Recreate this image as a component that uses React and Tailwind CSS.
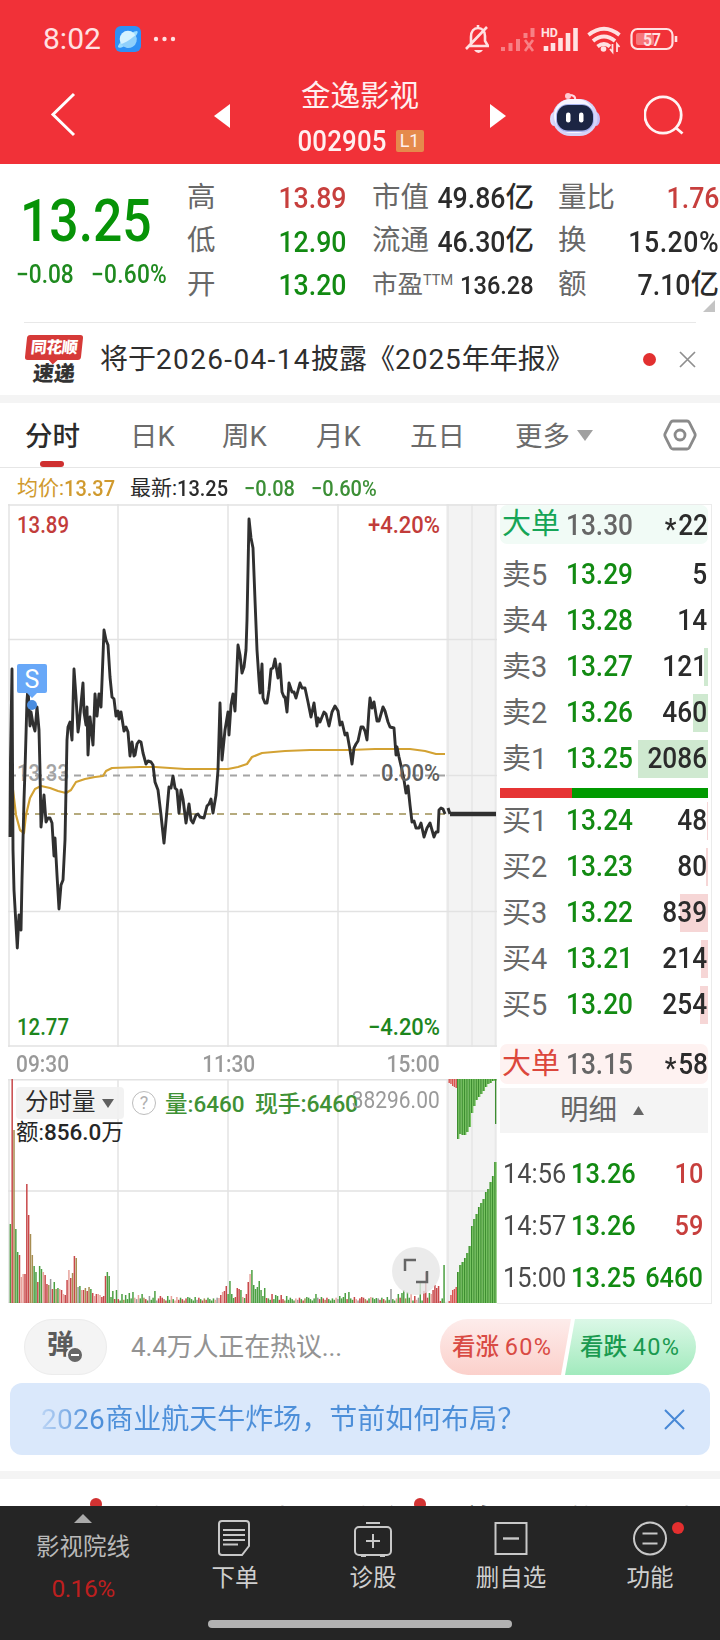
import clsx from 'clsx'

const QUOTES = [
  [
    { label: '高', value: '13.89', tone: 'up' },
    { label: '低', value: '12.90', tone: 'down' },
    { label: '开', value: '13.20', tone: 'down' },
  ],
  [
    { label: '市值', value: '49.86', unit: '亿' },
    { label: '流通', value: '46.30', unit: '亿' },
    { label: '市盈', sup: 'TTM', value: '136.28', small: true },
  ],
  [
    { label: '量比', value: '1.76', tone: 'up' },
    { label: '换', value: '15.20%', wide: true },
    { label: '额', value: '7.10', unit: '亿' },
  ],
]

const SELLS = [
  { label: '卖5', price: '13.29', qty: '5', bar: 0 },
  { label: '卖4', price: '13.28', qty: '14', bar: 0 },
  { label: '卖3', price: '13.27', qty: '121', bar: 4 },
  { label: '卖2', price: '13.26', qty: '460', bar: 15 },
  { label: '卖1', price: '13.25', qty: '2086', bar: 70 },
]

const BUYS = [
  { label: '买1', price: '13.24', qty: '48', bar: 1 },
  { label: '买2', price: '13.23', qty: '80', bar: 2 },
  { label: '买3', price: '13.22', qty: '839', bar: 28 },
  { label: '买4', price: '13.21', qty: '214', bar: 7 },
  { label: '买5', price: '13.20', qty: '254', bar: 8 },
]

const TRADES = [
  { time: '14:56', price: '13.26', qty: '10', up: true },
  { time: '14:57', price: '13.26', qty: '59', up: true },
  { time: '15:00', price: '13.25', qty: '6460', up: false },
]

const PRICE_LINE =
  '10,837 10.5,760 12,669 13,850 14,890 17.3,948 19,915 21,930 22,880 24,800 25,770 27,700 28,688 30,726 31,712 33,724 35,731 37,707 39,730 40,770 41,827 44,795 46,822 48,818 50,818 52,823 54,856 55,838 57,875 59,909 61,885 63,880 65,840 66,790 67,740 68,727 70,722 72,740 74,669 76,697 78,732 79,725 83,683 84,712 86,725 87,707 88,755 90,717 93,745 95,694 97,716 99,694 101,707 104,630 106,640 108,645 110,677 112,697 114,699 116,716 118,711 119,719 121,712 124,731 126,727 128,732 130,756 132,742 134,756 135,755 137,744 139,741 141,742 143,753 146,764 148,761 151,762 153,765 155,782 158,790 161,815 164,843 167,810 169,787 171,788 173,776 175,788 177,790 179,813 181,790 183,799 186,823 189,804 191,820 193,823 196,815 198,814 200,817 204,818 207,806 209,804 211,799 213,813 216,795 218,770 220,703 222,760 225,730 228,712 229,735 231,705 233,694 235,711 236,690 238,645 240,655 242,673 244,667 246,650 247,620 248,570 249,519 251,538 253,548 255,600 257,650 259,680 260,693 262,664 263,698 265,703 267,703 269,690 271,669 273,668 275,659 278,678 280,664 282,692 284,697 285,697 287,712 289,683 292,692 294,692 296,698 300,683 302,688 305,688 308,702 311,717 314,703 317,726 318,718 320,722 324,712 326,714 329,726 332,712 335,706 338,711 340,725 342,722 345,735 347,733 350,750 352,764 354,748 356,744 358,741 361,727 363,727 365,731 367,740 369,710 370,698 372,708 374,702 377,721 379,721 383,707 385,711 388,722 390,727 394,728 396,755 397,747 399,757 402,770 404,780 406,793 408,786 410,805 412,822 414,821 416,828 419,828 421,823 424,837 427,828 430,823 434,837 436,832 438,832 439,810 441,808 443,809 445,814'

const AVERAGE_LINE =
  '13,790 16,815 20,830 24,833 26,815 30,798 35,789 41,786 50,788 58,791 66,793 71,790 76,782 85,779 95,777 103,776 106,771 112,768 140,767 155,767 185,769 228,769 238,767 247,764 252,757 262,753 285,751 310,750 350,750 375,749 410,749 425,751 436,754 445,754'

const RED = '#c8484a'
const PALE_RED = '#e8a39c'
const GREEN = '#4c9f42'
const TAN = '#a78e52'
const GRAY = '#999999'

const BAR_COLORS = { r: RED, p: PALE_RED, g: GREEN, t: TAN, x: GRAY }

// colour key + height, one entry per minute
const OPENING =
  'g78 r223 t172 g73 g50 r47 p25 p28 r28 r118 r87 t68 t47 g36 g30 r20 g36 g33 p30 r27 r18 t17 x23 r13 g20 t13 g14 p13 r12 p8 r7 r22 p32 r24 t29 r46 t44 x15 g16 p12 r12 t14 r11 t15 g13 r9 p6 r8 p8 p7 r5 r6 r26 g30 g26 g5 g11 r3 g12'

const PEAKS = {
  61: 'g8', 63: 'g7', 65: 'g9', 67: 'g10', 70: 'p7', 72: 'g8', 76: 'x6', 79: 'g11', 82: 'r6', 86: 'g6', 88: 'p6', 91: 'p5',
  97: 'g5', 101: 'g5', 114: 'p4', 115: 'r7', 116: 'p10', 117: 'r11', 118: 'r16', 119: 'g8', 120: 'g21', 121: 'g8', 122: 'g4',
  123: 'r5', 124: 'r14', 125: 'r13', 126: 'g12', 127: 'p5', 128: 'g4', 129: 'r8', 130: 'r20', 131: 'p28', 132: 'g32',
  133: 'g17', 134: 'g13', 135: 'g15', 136: 'g21', 137: 'g12', 138: 'g6', 139: 'g14', 140: 'r4', 143: 'r8', 145: 'g7',
  146: 'g6', 148: 'r7', 151: 'g6', 162: 'g5', 167: 'g8', 170: 'g5', 180: 'g6', 182: 'g5', 183: 'g9', 185: 'g10', 188: 'r5',
  192: 'r5', 197: 'p5', 200: 'g4', 206: 'g5', 208: 'x13', 212: 'g8', 214: 'g9', 215: 'g12', 217: 'g10', 219: 'p8',
  221: 'r6', 224: 'g19', 226: 'r11', 227: 'r30', 229: 'g9', 230: 'p8', 231: 'r12', 232: 'r17', 233: 'r14', 234: 'r16',
  235: 'r1', 237: 'g37',
}

function buildVolume() {
  const bars = OPENING.split(' ')
  for (let i = bars.length; i < 238; i++) {
    const key = 'grgpgtrggrx'[(i * 7) % 11]
    bars.push(PEAKS[i] || key + (1.5 + ((i * 13) % 5) * 0.7))
  }
  return bars.map((b) => ({ color: BAR_COLORS[b[0]], h: Number(b.slice(1)) }))
}

const VOLUME = buildVolume()

const LATE_TOP = [60, 55, 56, 56, 53, 48, 34, 27, 21, 18, 15, 12, 8, 5, 4, 2, 1.5]
const LATE_BOTTOM = [31, 38, 41, 45, 50, 57, 77, 84, 89, 96, 100, 104, 111, 114, 121, 127, 141]

const toneClass = { up: 'text-[#c73f3d]', down: 'text-[#128a12]' }

// condensed figures
function Fig({ className, children }) {
  return <span className={clsx('inline-block scale-x-[.89] font-medium whitespace-nowrap', className)}>{children}</span>
}

function StatusBar() {
  return (
    <div className="flex h-[78px] items-center justify-between pl-[43px] pr-[42px] text-[#ffe1e2]">
      <div className="flex items-center">
        <span className="w-[72px] text-[30px] leading-none">8:02</span>
        <svg width="26" height="26" viewBox="0 0 26 26">
          <rect width="26" height="26" rx="6" fill="#2e90f5" />
          <path d="M3 21C2 18 16 5 22 5c2 1-1 6-7 11S4 23 3 21Z" fill="#9bdcff" />
          <circle cx="13" cy="13" r="8.3" fill="#d5f2ff" />
          <path d="M6 18C11 17 17 12 20.500 9a8.300 8.300 0 0 1-14.500 9Z" fill="#8fd0fc" />
        </svg>
        <svg className="ml-3" width="24" height="6" viewBox="0 0 24 6" fill="currentColor">
          <circle cx="3" cy="3" r="2.200" />
          <circle cx="11.500" cy="3" r="2.200" />
          <circle cx="20" cy="3" r="2.200" />
        </svg>
      </div>
      <svg width="214" height="32" viewBox="464 23 214 32" fill="none" stroke="currentColor">
        <path d="M468 46h21M471 45V37c0-6 3-9 7-9s7 3 7 8v5l3 5M478 28v-3M466 49 487 27" strokeWidth="2.600" />
        <path d="M474 50h9q-2 3-4.500 3T474 50Z" fill="currentColor" stroke="none" />
        <g opacity=".45" strokeWidth="4">
          <path d="M503 51v-4M510.500 51V43M518 51V39M525.500 38v-5M532.500 37v-9" />
          <path d="m525 40 8 11m0-11-8 11" strokeWidth="2.600" />
        </g>
        <path d="M546 51v-5M553 51v-8M560.500 51V38M568 51V33M575.500 51V28" strokeWidth="4.600" />
        <text x="541" y="37" fontSize="12.500" fontWeight="700" fill="currentColor" stroke="none">HD</text>
        <path d="M588.500 35q15.500-12.500 31 0M593 41q11-9 22 0M597.500 46.500q6.500-5 12.500 0" strokeWidth="3.800" />
        <circle cx="603.500" cy="49" r="2.800" fill="currentColor" stroke="none" />
        <path d="M612.500 44v8l-2.500-3M617 52v-8l2.500 3" strokeWidth="1.800" />
        <rect x="631.500" y="29" width="41" height="20" rx="6" strokeWidth="2.200" />
        <rect x="636" y="33" width="18" height="12" rx="2" fill="currentColor" opacity=".4" stroke="none" />
        <path d="M676 36v6" strokeWidth="2.600" />
        <text x="643" y="45.500" fontSize="18" fontWeight="600" textLength="18" lengthAdjust="spacingAndGlyphs" fill="currentColor" stroke="none">57</text>
      </svg>
    </div>
  )
}

function Robot() {
  return (
    <svg width="50" height="46" viewBox="0 0 50 46">
      <path d="M25 9c1-5-2-6-6-6" fill="none" stroke="#ffd9e2" strokeWidth="2" />
      <circle cx="18" cy="4" r="3" fill="#ffc9d2" />
      <ellipse cx="4" cy="27" rx="4" ry="7" fill="#dcdcfa" />
      <ellipse cx="46" cy="27" rx="4" ry="7" fill="#c3bdf6" />
      <rect x="2.500" y="7" width="45" height="37" rx="18" fill="#d5d4f8" />
      <rect x="4" y="7" width="40" height="34" rx="17" fill="#f8f6ff" />
      <rect x="6" y="12" width="38" height="28" rx="12" fill="#a9b3ee" />
      <rect x="7" y="13" width="36" height="25.500" rx="11" fill="#1c2543" />
      <rect x="16" y="20.500" width="4.500" height="10" rx="2.200" fill="#fff" />
      <rect x="29" y="20.500" width="4.500" height="10" rx="2.200" fill="#fff" />
    </svg>
  )
}

function TitleBar() {
  return (
    <div className="flex h-[86px] items-start text-white">
      <svg className="ml-[49px] mt-[14px]" width="30" height="46" viewBox="0 0 30 46" fill="none" stroke="#fff" strokeWidth="3">
        <path d="M25 2 4 22.500 25 43" />
      </svg>
      <svg className="ml-[135px] mt-[26px]" width="16" height="24" viewBox="0 0 16 24" fill="#fff">
        <path d="M16 0v24L0 12Z" />
      </svg>
      <div className="flex w-[260px] flex-col items-center text-[#fff0f0]">
        <span className="mt-[1px] text-[29.500px] leading-[34px]">金逸影视</span>
        <div className="ml-[-4px] mt-[14px] flex items-center">
          <Fig className="text-[29px] leading-[28px] tracking-[0.200px]">002905</Fig>
          <span className="ml-[3px] flex h-[22px] w-[28px] items-center justify-center rounded-[2px] bg-[#e58a4c] text-[18px] leading-none">L1</span>
        </div>
      </div>
      <svg className="mt-[26px]" width="16" height="24" viewBox="0 0 16 24" fill="#fff">
        <path d="M0 0v24l16-12Z" />
      </svg>
      <div className="ml-[44px] mt-[14px]">
        <Robot />
      </div>
      <svg className="ml-[44px] mt-[17px]" width="42" height="42" viewBox="0 0 42 42" fill="none" stroke="#fff3f3" strokeWidth="2.800">
        <circle cx="19" cy="20" r="18.200" />
        <path d="m31.500 32.500 7 6" />
      </svg>
    </div>
  )
}

function QuoteColumn({ rows, className }) {
  return (
    <div className={className}>
      {rows.map((row) => (
        <div key={row.label} className="flex h-[43.500px] items-center justify-between leading-none">
          <span className={clsx('flex text-[#686868]', row.sup ? 'text-[25.500px]' : 'text-[28.500px]')}>
            {row.label}
            {row.sup && <sup className="top-0 mt-[2px] text-[14.500px] leading-none">{row.sup}</sup>}
          </span>
          <span className={clsx('flex w-0 items-center justify-end', toneClass[row.tone] || 'text-[#2b2b2b]')}>
            <Fig className={clsx('mt-px origin-right', row.small ? 'text-[26.500px]' : 'text-[30px]', row.wide && 'tracking-[0.600px]')}>
              {row.value}
            </Fig>
            {row.unit && <span className="text-[28.500px] font-medium">{row.unit}</span>}
          </span>
        </div>
      ))}
    </div>
  )
}

function QuotePanel() {
  return (
    <div className="flex h-[159px] flex-col">
      <div className="flex h-[136px] pt-[12px]">
        <div className="w-[187px] text-[#079307]">
          <span className="ml-[20px] mt-[15px] block w-[160px] origin-left scale-x-[.86] text-[60px] font-medium leading-[60px]">13.25</span>
          <div className="mt-[9px] flex text-[25.500px] font-medium leading-[28px] text-[#1f8a1f]">
            <Fig className="ml-[16px] w-[75px] origin-left">−0.08</Fig>
            <Fig className="origin-left tracking-[0.300px]">−0.60%</Fig>
          </div>
        </div>
        <QuoteColumn rows={QUOTES[0]} className="w-[160px]" />
        <QuoteColumn rows={QUOTES[1]} className="ml-[25px] w-[162px]" />
        <QuoteColumn rows={QUOTES[2]} className="ml-[24px] w-[161px]" />
      </div>
      <svg className="ml-[703px]" width="12" height="12" viewBox="0 0 12 12" fill="#c4c4c4">
        <path d="M12 0v12H0Z" />
      </svg>
      <div className="mx-6 mt-[10px] h-px bg-[#e8e8e8]" />
    </div>
  )
}

function Notice() {
  return (
    <div className="flex h-[72px] items-center pl-6 pr-6 pt-[1px]">
      <div className="flex w-[60px] flex-col items-center">
        <span className="relative flex h-[25px] w-[56px] -skew-x-6 items-center justify-center rounded-[3px] bg-[#d63a38] text-[16px] font-black leading-none tracking-[-0.500px] text-white">
          同花顺
          <span className="absolute -bottom-[3px] left-[25px] size-[7px] rotate-45 bg-[#d63a38]" />
        </span>
        <span className="mt-[4px] -skew-x-6 text-[21px] font-black leading-[21px] text-[#333]">速递</span>
      </div>
      <span className="ml-[16px] flex-1 whitespace-nowrap text-[28px] leading-none text-[#2e2e2e]">
        将于<span className="tracking-[1.350px]">2026-04-14</span>披露《<span className="tracking-[1px]">2025</span>年年报》
      </span>
      <span className="size-[13px] rounded-full bg-[#e23030]" />
      <svg className="ml-[23px]" width="17" height="17" viewBox="0 0 17 17" stroke="#8f8f8f" strokeWidth="1.700">
        <path d="m1 1 15 15M16 1 1 16" />
      </svg>
    </div>
  )
}

function PeriodTabs() {
  return (
    <div className="flex h-[65px] border-b border-[#e6e6e6] text-[27.500px] leading-[67px] text-[#6b6b6b]">
      <div className="relative ml-[25px] w-[105px] font-medium text-[#2b2b2b]">
        分时
        <span className="absolute bottom-0 left-[15px] h-[6px] w-6 rounded-full bg-[#cf3030]" />
      </div>
      <span className="w-[92px]">日K</span>
      <span className="w-[94px]">周K</span>
      <span className="w-[94px]">月K</span>
      <span className="w-[105px]">五日</span>
      <span>更多</span>
      <svg className="ml-[7px] mt-[27px]" width="16" height="11" viewBox="0 0 16 11" fill="#a0a0a0">
        <path d="M0 0h16L8 11Z" />
      </svg>
      <svg className="ml-[70px] mt-[16px]" width="34" height="32" viewBox="0 0 34 32" fill="none" stroke="#8a8a8a" strokeWidth="2.800">
        <path d="M10 2h14q1.500 0 2.300 1.400l5.500 11q.8 1.600 0 3.200l-5.500 11Q25.500 30 24 30H10q-1.500 0-2.300-1.400l-5.500-11q-.8-1.600 0-3.200l5.500-11Q8.500 2 10 2Z" />
        <circle cx="17" cy="16" r="5" />
      </svg>
    </div>
  )
}

function ChartLegend() {
  return (
    <div className="flex h-[37px] items-center pl-[17px] pt-[3px] text-[21px] leading-none text-[#2b2b2b]">
      <span className="flex w-[113px] items-center text-[#d09a2e]">
        均价:<Fig className="origin-left text-[22.500px]">13.37</Fig>
      </span>
      <span className="flex w-[114px] items-center">
        最新:<Fig className="origin-left text-[22.500px]">13.25</Fig>
      </span>
      <Fig className="w-[67px] origin-left text-[22.500px] text-[#3c8f36]">−0.08</Fig>
      <Fig className="origin-left text-[22.500px] text-[#3c8f36]">−0.60%</Fig>
    </div>
  )
}

function PriceChart() {
  return (
    <svg className="block" width="489" height="543" viewBox="8 504 489 543" fill="none">
      <rect x="446" y="504" width="51" height="543" fill="#f3f3f3" />
      <path d="M9 504V1047M118 504V1047M228 504V1047M338 504V1047M448 504V1047M472 504V1047M495.500 504V1047" stroke="#e8e8e8" strokeWidth="1.800" />
      <path d="M8 505H497M8 639.500H497M446 775.500H497M8 911.500H497M8 1046H497" stroke="#e2e2e2" strokeWidth="1.400" />
      <path d="M9 775.500H446" stroke="#a4a4a4" strokeWidth="1.800" strokeDasharray="7 6" />
      <path d="M9 814H446" stroke="#b5aa7d" strokeWidth="1.800" strokeDasharray="7 6" />
      <g fontSize="24" fontWeight="500">
        <text x="17" y="533" textLength="52" lengthAdjust="spacingAndGlyphs" fill="#c23c3a">13.89</text>
        <text x="368" y="533" textLength="72" lengthAdjust="spacingAndGlyphs" fill="#c23c3a">+4.20%</text>
        <text x="17" y="781" textLength="52" lengthAdjust="spacingAndGlyphs" fill="#a4a4a4">13.33</text>
        <text x="17" y="1035" textLength="52" lengthAdjust="spacingAndGlyphs" fill="#1d861d">12.77</text>
        <text x="368" y="1035" textLength="72" lengthAdjust="spacingAndGlyphs" fill="#1d861d">−4.20%</text>
      </g>
      <polyline points={AVERAGE_LINE} stroke="#d3a233" strokeWidth="2.200" strokeLinejoin="round" />
      <polyline points={PRICE_LINE} stroke="#303030" strokeWidth="2.900" strokeLinejoin="round" />
      <text x="381" y="781" textLength="59" lengthAdjust="spacingAndGlyphs" fontSize="24" fontWeight="500" fill="#606060">0.00%</text>
      <path d="M448 808l2 6" stroke="#303030" strokeWidth="3" />
      <path d="M450 814H496" stroke="#303030" strokeWidth="4.400" />
      <circle cx="32" cy="705" r="5" fill="#4a8de0" />
      <path d="M19 664h26q2 0 2 2v25q0 2-2 2h-8l-5 5-5-5h-8q-2 0-2-2v-25q0-2 2-2Z" fill="#68a8f8" />
      <text x="32" y="688" fontSize="25" textAnchor="middle" fill="#fff">S</text>
    </svg>
  )
}

function TimeAxis() {
  return (
    <div className="flex h-[32px] items-center justify-between pl-[8px] pr-[57px] pt-[3px] text-[23.500px] leading-none text-[#999]">
      <Fig className="origin-left">09:30</Fig>
      <Fig className="pl-[2px]">11:30</Fig>
      <Fig className="origin-right">15:00</Fig>
    </div>
  )
}

function VolumeChart() {
  return (
    <div className="relative h-[224px] w-[489px]">
      <svg className="block" width="489" height="224" viewBox="8 1079 489 224">
        <rect x="446" y="1079" width="51" height="224" fill="#f3f3f3" />
        <path d="M9 1079V1303M118 1079V1303M228 1079V1303M338 1079V1303M448 1079V1303M472 1079V1303M495.500 1079V1303" stroke="#e8e8e8" strokeWidth="1.800" />
        <path d="M8 1079.700H497M8 1191H497M8 1302.500H497" stroke="#e2e2e2" strokeWidth="1.400" />
        {VOLUME.map((bar, i) => (
          <rect key={i} x={9.6 + i * 1.83} y={1302 - bar.h} width="1.500" height={bar.h + 1} fill={bar.color} />
        ))}
        {[4, 5, 7, 8, 9].map((h, i) => (
          <rect key={h} x={448.5 + i * 1.75} y="1079" width="1.400" height={h} fill="#d9534f" />
        ))}
        {[2, 8, 13, 14, 16].map((h, i) => (
          <rect key={h} x={448.5 + i * 1.75} y={1303 - h} width="1.400" height={h} fill="#d9534f" />
        ))}
        {LATE_TOP.map((h, i) => (
          <g key={i}>
            <rect x={457 + i * 2.33} y="1079" width="2.400" height={h} fill="#79c463" />
            <rect x={457 + i * 2.33} y="1079" width="1.100" height={h} fill="#3d8d31" />
          </g>
        ))}
        {LATE_BOTTOM.map((h, i) => (
          <g key={i}>
            <rect x={457 + i * 2.33} y={1303 - h} width="2.400" height={h} fill="#79c463" />
            <rect x={457 + i * 2.33} y={1303 - h} width="1.100" height={h} fill="#3d8d31" />
          </g>
        ))}
        <rect x="495" y="1079" width="1.300" height="45" fill="#3d8d31" />
      </svg>
      <div className="absolute inset-x-0 top-0 pl-2 leading-none">
        <div className="mt-[8px] flex h-[32px] items-center">
          <span className="flex h-[32px] w-[108px] items-center rounded bg-[#f1f1f1]/90 pl-[9px] text-[23.500px] text-[#2b2b2b]">
            分时量
            <svg className="ml-[6px]" width="12" height="9" viewBox="0 0 12 9" fill="#606060">
              <path d="M0 0h12L6 9Z" />
            </svg>
          </span>
          <span className="ml-[8px] flex size-[24px] items-center justify-center rounded-full border-[1.500px] border-[#bdbdbd] text-[18px] text-[#b0b0b0]">?</span>
          <span className="ml-[9px] mt-[2px] w-[90px] whitespace-nowrap text-[22.500px] font-medium text-[#3f9135]">量:6460</span>
          <span className="mt-[2px] whitespace-nowrap text-[23px] font-medium tracking-[-0.200px] text-[#3f9135]">现手:6460</span>
        </div>
        <span className="mt-[1px] block text-[22.500px] leading-[24px] text-[#262626]">
          额:<span className="font-medium">856.0</span>万
        </span>
      </div>
      <Fig className="absolute right-[57px] top-[10px] origin-right text-[23.500px] font-normal leading-none text-[#9a9a9a]">38296.00</Fig>
      <div className="absolute left-[384px] top-[168px] flex size-[48px] items-center justify-center rounded-full bg-[#e6e6e6]/80">
        <svg width="26" height="26" viewBox="0 0 26 26" fill="none" stroke="#666" strokeWidth="2.500">
          <path d="M2 13V2h11M24 13v11H13" />
        </svg>
      </div>
    </div>
  )
}

function BigOrder({ price, qty, className, labelClass }) {
  return (
    <div className={clsx('flex items-center rounded-[7px] pl-[2px] text-[29.500px] leading-none', className)}>
      <span className={clsx('w-[64px] text-[29px]', labelClass)}>大单</span>
      <Fig className="mt-[2px] w-[68px] origin-left text-[#666]">{price}</Fig>
      <Fig className="mt-[2px] flex-1 origin-right text-right text-[#2b2b2b]">
        <span className="relative top-[4px] mr-[2px]">*</span>
        {qty}
      </Fig>
    </div>
  )
}

function BookRow({ label, price, qty, bar, barClass }) {
  return (
    <div className="relative flex h-[46px] items-center pl-[2px] text-[29px] leading-none">
      <span className={clsx('absolute right-0 top-[4px] h-[38px]', barClass)} style={{ width: bar }} />
      <span className="w-[64px] text-[#686868]">{label}</span>
      <Fig className="w-[68px] origin-left text-[29.500px] text-[#128a12]">{price}</Fig>
      <Fig className="relative flex-1 origin-right pr-[1px] text-right text-[29.500px] text-[#2b2b2b]">{qty}</Fig>
    </div>
  )
}

function OrderBook() {
  return (
    <div className="h-[800px] w-[215px] border border-l-0 border-[#ebebeb] pl-[3px] pr-[3px]">
      <BigOrder price="13.30" qty="22" className="h-[39px] bg-[#f1fbf6]" labelClass="text-[#16a557]" />
      <div className="pt-[8px]">
        {SELLS.map((row) => (
          <BookRow key={row.label} {...row} barClass="bg-[#cfe9d0]" />
        ))}
      </div>
      <div className="mt-[6px] flex h-[10px] bg-[#009a00]">
        <span className="w-[72px] bg-[#e63434]" />
      </div>
      <div>
        {BUYS.map((row) => (
          <BookRow key={row.label} {...row} barClass="bg-[#f6d6d6]" />
        ))}
      </div>
      <BigOrder price="13.15" qty="58" className="mt-[16px] h-[40px] bg-[#fef2f1]" labelClass="text-[#dc473c]" />
      <div className="mt-[4px] flex h-[45px] items-center justify-center bg-[#f4f4f4] text-[28.500px] leading-none text-[#666]">
        <span className="-ml-[4px] mt-[2px]">明细</span>
        <svg className="ml-[16px]" width="11" height="9" viewBox="0 0 11 9" fill="#666">
          <path d="M0 9h11L5.500 0Z" />
        </svg>
      </div>
      <div className="pt-[15px]">
        {TRADES.map((t) => (
          <div key={t.time} className="flex h-[52px] items-center pl-[3px] pr-[3px] text-[28.500px] leading-none">
            <Fig className="w-[68px] origin-left font-normal text-[#4a4a4a]">{t.time}</Fig>
            <Fig className="w-[68px] origin-left text-[#128a12]">{t.price}</Fig>
            <span className={clsx('flex w-[64px] justify-end', t.up ? toneClass.up : toneClass.down)}>
              <Fig className="origin-right">{t.qty}</Fig>
            </span>
          </div>
        ))}
      </div>
    </div>
  )
}

function CommentRow() {
  return (
    <div className="mt-[15px] flex h-[56px] items-center px-6">
      <span className="relative flex h-[56px] w-[83px] items-center justify-center rounded-full border border-[#ececec] bg-[#f4f4f4] pb-[4px] pr-[10px] text-[27px] font-bold leading-none text-[#5b5b5b]">
        弹
        <svg className="absolute left-[41px] top-[26px]" width="18" height="18" viewBox="0 0 18 18">
          <circle cx="9" cy="9" r="8" fill="#666" stroke="#f4f4f4" strokeWidth="2" />
          <path d="M5 9h8" stroke="#fff" strokeWidth="2" />
        </svg>
      </span>
      <span className="ml-6 flex-1 text-[26px] leading-none tracking-[-0.150px] text-[#939393]">4.4万人正在热议...</span>
      <div className="flex h-[56px] w-[256px] overflow-hidden rounded-full text-[23.500px] font-medium leading-[56px]">
        <span className="w-[131px] bg-gradient-to-b from-[#fdeceb] to-[#fbd0cb] pl-[12px] text-[#d94a44] [clip-path:polygon(0_0,100%_0,121px_100%,0_100%)]">
          看涨 <span className="font-normal tracking-[1.200px]">60%</span>
        </span>
        <span className="-ml-[6px] w-[131px] bg-gradient-to-b from-[#dbf8e7] to-[#a1eabd] pl-[15px] text-[#1a9a50] [clip-path:polygon(10px_0,100%_0,100%_100%,0_100%)]">
          看跌 <span className="font-normal tracking-[1.200px]">40%</span>
        </span>
      </div>
    </div>
  )
}

function PromoBanner() {
  return (
    <div className="mx-[10px] mt-[8px] flex h-[72px] items-center justify-between rounded-xl bg-[#dae8fb] pl-[31px] pr-[25px]">
      <span className="bg-gradient-to-r from-[#bcd5f5] via-[#4d8fd9] via-10% to-[#4d8fd9] bg-clip-text pt-[2px] text-[28px] leading-[40px] text-transparent">
        <span className="tracking-[0.300px]">2026</span>商业航天牛炸场，节前如何布局？
      </span>
      <svg width="21" height="21" viewBox="0 0 21 21" stroke="#4788d6" strokeWidth="2">
        <path d="m1 1 19 19M20 1 1 20" />
      </svg>
    </div>
  )
}

// only the tips of the labels clear the bottom nav
function InfoTabs() {
  return (
    <div className="relative flex h-[27px] shrink-0 overflow-hidden pt-[22px] text-[28px] leading-[40px] text-[#666]">
      <span className="ml-[39px] w-[104px]">看点</span>
      <span className="w-[98px]">资讯</span>
      <span className="w-[110px]">公告</span>
      <span className="w-[115px]">资金</span>
      <span className="w-[106px] font-bold text-[#2b2b2b]">首页</span>
      <span className="w-[96px]">简况</span>
      <span>财务</span>
      <span className="absolute left-[90px] top-[19px] size-[12px] rounded-full bg-[#d13232]" />
      <span className="absolute left-[414px] top-[19px] size-[12px] rounded-full bg-[#d13232]" />
    </div>
  )
}

const NAV = [
  {
    label: '下单',
    width: 'w-[138px]',
    icon: (
      <>
        <path d="M5 1h24q3 0 3 3v22l-7 9H5q-3 0-3-3V4q0-3 3-3Z" />
        <path d="M6 10h22M6 15h22M6 20h22M6 24.500h15" strokeWidth="1.800" />
      </>
    ),
  },
  {
    label: '诊股',
    width: 'w-[138px]',
    icon: (
      <>
        <rect x="0" y="7" width="36" height="28" rx="4" />
        <path d="M11 3h14M6 36h5M25 36h5M11 21h14M18 14v14" />
      </>
    ),
  },
  {
    label: '删自选',
    width: 'w-[138px]',
    icon: (
      <>
        <rect x="2.500" y="3" width="31" height="31" />
        <path d="M10 18.500h16" strokeWidth="2.400" />
      </>
    ),
  },
  {
    label: '功能',
    width: 'w-[140px]',
    dot: true,
    icon: (
      <>
        <circle cx="18" cy="18.500" r="16" />
        <path d="M10.500 13.500h15M10.500 23.500h15" />
      </>
    ),
  },
]

function BottomNav() {
  return (
    <div className="flex h-[134px] shrink-0 flex-col bg-[#252525] text-[#cfcfcf]">
      <div className="flex flex-1">
        <div className="flex w-[166px] flex-col items-center pt-[8px] leading-none">
          <svg width="18" height="9" viewBox="0 0 18 9" fill="#aaa">
            <path d="M0 9h18L9 0Z" />
          </svg>
          <span className="mt-[11px] text-[23.500px] leading-[26px] text-[#b9b9b9]">影视院线</span>
          <span className="mt-[16px] text-[24.500px] leading-[26px] tracking-[-0.500px] text-[#bd1f1f]">0.16%</span>
        </div>
        {NAV.map((item) => (
          <div key={item.label} className={clsx('flex flex-col items-center pt-[14px]', item.width)}>
            <div className="relative">
              <svg className="overflow-visible" width="36" height="38" viewBox="0 0 36 38" fill="none" stroke="#c8c8c8" strokeWidth="2">
                {item.icon}
              </svg>
              {item.dot && <span className="absolute -right-[16px] top-[2px] size-[12px] rounded-full bg-[#e42f2f]" />}
            </div>
            <span className="mt-[7px] text-[23.500px] leading-[26px]">{item.label}</span>
          </div>
        ))}
      </div>
      <div className="mx-auto mb-[12px] h-[8px] w-[304px] rounded-full bg-[#b2b2b2]" />
    </div>
  )
}

export default function App() {
  return (
    <div className="flex h-[1640px] w-[720px] flex-col overflow-hidden bg-white font-[Roboto,'Noto_Sans_CJK_SC',sans-serif]">
      <header className="h-[164px] bg-[#f13138]">
        <StatusBar />
        <TitleBar />
      </header>
      <QuotePanel />
      <Notice />
      <div className="h-[8px] bg-[#f4f4f4]" />
      <PeriodTabs />
      <ChartLegend />
      <div className="-mt-[1px] flex h-[800px] pl-[8px]">
        <div className="w-[489px]">
          <PriceChart />
          <TimeAxis />
          <VolumeChart />
        </div>
        <OrderBook />
      </div>
      <CommentRow />
      <PromoBanner />
      <div className="mt-[16px] h-[8px] shrink-0 bg-[#f4f4f4]" />
      <InfoTabs />
      <BottomNav />
    </div>
  )
}
